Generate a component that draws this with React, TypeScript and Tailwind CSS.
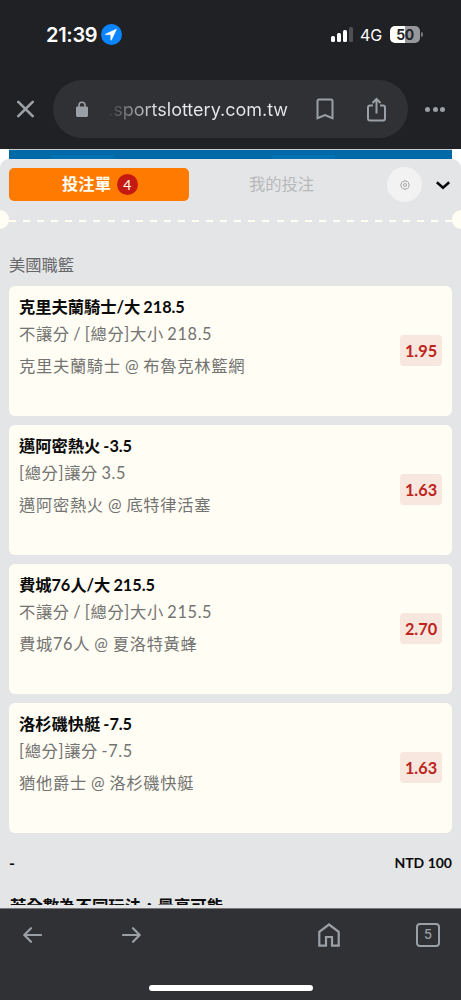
type BetTypes = {
  title: string;
  market: string;
  match: string;
  odds: string;
};

const bets: BetTypes[] = [
  { title: '克里夫蘭騎士/大 218.5', market: '不讓分 / [總分]大小 218.5', match: '克里夫蘭騎士 @ 布魯克林籃網', odds: '1.95' },
  { title: '邁阿密熱火 -3.5', market: '[總分]讓分 3.5', match: '邁阿密熱火 @ 底特律活塞', odds: '1.63' },
  { title: '費城76人/大 215.5', market: '不讓分 / [總分]大小 215.5', match: '費城76人 @ 夏洛特黃蜂', odds: '2.70' },
  { title: '洛杉磯快艇 -7.5', market: '[總分]讓分 -7.5', match: '猶他爵士 @ 洛杉磯快艇', odds: '1.63' },
];

const StatusBar = () => {
  return (
    <div className="flex h-[69px] items-center pl-[46px] pr-[38px]">
      <span className="w-[55px] text-[20px] font-semibold tracking-[-0.3px] text-white">21:39</span>
      <svg className="h-[21px] w-[21px]" viewBox="0 0 21 21">
        <circle cx="10.5" cy="10.5" r="10.5" fill="#0a84ff" />
        <path d="M15.6 5.1 4.6 9.9c-.5.3-.4.8.1.8h5v5.1c0 .6.6.6.8.1z" fill="#fff" stroke="#fff" strokeWidth=".4" strokeLinejoin="round" />
      </svg>
      <div className="ml-auto flex items-center">
        <div className="mr-[7px] flex h-[15px] items-end gap-[2px]">
          <span className="h-[6px] w-[4px] rounded-[1.5px] bg-white" />
          <span className="h-[9px] w-[4px] rounded-[1.5px] bg-white" />
          <span className="h-[12px] w-[4px] rounded-[1.5px] bg-white" />
          <span className="h-[15px] w-[4px] rounded-[1.5px] bg-[#505154]" />
        </div>
        <span className="mr-[7px] w-[23px] text-[16px] tracking-[-0.2px] text-white">4G</span>
        <div className="flex h-[17px] w-[30px] items-center justify-center rounded-[5px] bg-[linear-gradient(90deg,#fff_50%,#98989a_50%)] text-[14px] font-bold leading-none tracking-[-0.5px] text-[#242528]">
          50
        </div>
        <span className="ml-[1px] h-[5px] w-[2px] rounded-r-full bg-[#77787a]" />
      </div>
    </div>
  );
};

const AddressBar = () => {
  return (
    <div className="flex h-[80px] items-center">
      <svg className="ml-[16px] h-[18px] w-[19px]" viewBox="0 0 19 18" fill="none" stroke="#9aa0a6" strokeWidth="2.7" strokeLinecap="round">
        <path d="m2.3 1.9 14.4 14.2M16.7 1.9 2.3 16.1" />
      </svg>
      <div className="ml-[18px] flex h-[58px] w-[355px] items-center rounded-full bg-[#303134]">
        <svg className="ml-[23px] h-[16px] w-[12px]" viewBox="0 0 12 16">
          <path d="M3 6V4.2a3 3 0 0 1 6 0V6" fill="none" stroke="#9aa0a6" strokeWidth="1.6" />
          <rect y="5.6" width="12" height="10.4" rx="1.4" fill="#9aa0a6" />
        </svg>
        <span className="ml-[20px] w-[184px] whitespace-nowrap bg-[linear-gradient(90deg,#3a3b3e_0,#e8eaed_50px)] bg-clip-text pt-[2px] text-[18px] leading-[26px] text-transparent">
          .sportslottery.com.tw
        </span>
        <svg className="ml-[24px] h-[23px] w-[18px]" viewBox="0 0 18 23" fill="none" stroke="#9aa0a6" strokeWidth="2">
          <path d="M1.5 20.2V3q0-1.5 1.5-1.5h12q1.5 0 1.5 1.5v17.2L9 17.1z" />
        </svg>
        <svg className="ml-[33px] h-[25px] w-[19px]" viewBox="0 0 19 25" fill="none" stroke="#9aa0a6" strokeWidth="2">
          <path d="M6 8.5H3Q1 8.5 1 10.5v11q0 2 2 2h13q2 0 2-2v-11q0-2-2-2h-3M9.5 16.5V2.5M5.5 6l4-4 4 4" />
        </svg>
      </div>
      <div className="ml-[17px] flex gap-[2.7px]">
        <span className="h-[5px] w-[5px] rounded-full bg-[#9aa0a6]" />
        <span className="h-[5px] w-[5px] rounded-full bg-[#9aa0a6]" />
        <span className="h-[5px] w-[5px] rounded-full bg-[#9aa0a6]" />
      </div>
    </div>
  );
};

const Tabs = () => {
  return (
    <div className="flex h-[51px] items-center pl-[9px]">
      <button className="flex h-[33px] w-[180px] items-center justify-center gap-[6px] rounded-[5px] bg-[#ff7a00] pl-[2px] text-[16.3px] font-bold text-[#fffdf4]">
        投注單
        <span className="flex h-[21px] w-[21px] items-center justify-center rounded-full bg-[#c41a11] text-[14px] font-normal">4</span>
      </button>
      <span className="ml-[60px] w-[138px] text-[16.3px] text-[#b7b8ba]">我的投注</span>
      <div className="flex h-[35px] w-[35px] items-center justify-center rounded-full bg-[#f2f2f2]">
        <svg className="h-[10px] w-[10px]" viewBox="0 0 20 20" fill="none" stroke="#a3a3a3" strokeWidth="1.9" strokeLinejoin="round">
          <path d="M8 1.5h4l.7 2.2 2.2-.8 2.6 2.7-1 2.2 2 .9v3l-2 .8 1 2.2-2.6 2.6-2.2-.9-.7 2.1H8l-.8-2.1-2.2.9-2.6-2.6 1-2.2-2-.8v-3l2-.9-1-2.2L5 2.9l2.2.8z" />
          <circle cx="10" cy="10" r="3" />
        </svg>
      </div>
      <svg className="ml-[14px] mt-px h-[9px] w-[14px]" viewBox="0 0 14 9" fill="none" stroke="#0b0b0b" strokeWidth="2.6">
        <path d="m.8 1.3 6.2 5.5 6.2-5.5" />
      </svg>
    </div>
  );
};

const Divider = () => {
  return (
    <div className="flex h-[19px] items-center">
      <span className="h-[19px] w-[9px] rounded-r-full bg-[#fffdf4]" />
      <span className="mt-[3px] h-[2px] flex-1 bg-[repeating-linear-gradient(90deg,#fffdf4_0,#fffdf4_7px,transparent_7px,transparent_14.08px)]" />
      <span className="h-[19px] w-[9px] rounded-l-full bg-[#fffdf4]" />
    </div>
  );
};

const BetCard = ({ title, market, match, odds }: BetTypes) => {
  return (
    <div className="flex h-[130px] items-center justify-between rounded-[6px] bg-[#fffdf4] px-[10px]">
      <div className="flex h-full flex-col whitespace-nowrap pt-[7px] text-[16.3px] text-[#737371]">
        <span className="h-[27px] font-bold leading-[27px] tracking-[-0.05px] text-[#0b0b0b] [word-spacing:-0.7px]">{title}</span>
        <span className="h-[28px] leading-[28px] tracking-[0.65px] [word-spacing:-1.3px]">{market}</span>
        <span className="mt-[4px] h-[28px] leading-[28px] tracking-[0.68px] [word-spacing:-0.7px]">{match}</span>
      </div>
      <span className="-mt-px flex h-[31px] w-[42px] items-center justify-center rounded-[4px] bg-[#f8e7df] pt-px text-[16.3px] font-bold text-[#bd251c]">
        {odds}
      </span>
    </div>
  );
};

const Toolbar = () => {
  return (
    <div className="h-[92px] border-t border-[#77787a] bg-[#303134]">
      <div className="flex h-[51px] items-center pl-[23px]">
        <svg className="h-[16px] w-[19px]" viewBox="0 0 19 16" fill="none" stroke="#9aa0a6" strokeWidth="2.2" strokeLinecap="round" strokeLinejoin="round">
          <path d="M18 8H1.5M8 1.2 1.3 8 8 14.8" />
        </svg>
        <svg className="ml-[80px] h-[16px] w-[19px]" viewBox="0 0 19 16" fill="none" stroke="#9aa0a6" strokeWidth="2.2" strokeLinecap="round" strokeLinejoin="round">
          <path d="M1 8h16.5M11 1.2 17.7 8 11 14.8" />
        </svg>
        <svg className="ml-[177px] h-[24px] w-[22px]" viewBox="0 0 22 24" fill="none" stroke="#9aa0a6" strokeWidth="2.2">
          <path d="M1.3 22.7V8.8L11 1.5l9.7 7.3v13.9H14V14H8v8.7z" />
        </svg>
        <div className="ml-[76px] flex h-[24px] w-[24px] items-center justify-center rounded-[4px] border-2 border-[#9aa0a6] text-[13px] font-medium text-[#9aa0a6]">
          5
        </div>
      </div>
      <div className="mx-auto mt-[25px] h-[6px] w-[164px] rounded-full bg-white" />
    </div>
  );
};

const App = () => {
  return (
    <div className="flex h-[1000px] w-[461px] flex-col overflow-hidden bg-[#e4e5e7] font-['Inter','Noto_Sans_CJK_TC',sans-serif]">
      <header className="h-[149px] shrink-0 bg-[#202124]">
        <StatusBar />
        <AddressBar />
      </header>
      <main className="h-[759px] shrink-0 overflow-hidden bg-white font-['Lato','Noto_Sans_CJK_TC',sans-serif]">
        <div className="mx-[9px] flex h-[10px] items-end border-t border-[#c9cdd0] bg-[#006aa8]">
          <span className="ml-[42px] h-[4px] w-[63px] bg-[#0072b3]" />
          <span className="ml-[158px] h-[4px] w-[63px] bg-[#0072b3]" />
        </div>
        <div className="h-[749px] rounded-t-[9px] bg-[#e4e5e7]">
          <Tabs />
          <Divider />
          <h2 className="flex h-[57px] items-center pl-[9px] pt-[15px] text-[16.3px] text-[#666769]">美國職籃</h2>
          <div className="flex flex-col gap-[9px] px-[9px]">
            {bets.map((bet) => (
              <BetCard key={bet.title} {...bet} />
            ))}
          </div>
          <div className="flex h-[61px] items-center justify-between px-[9px] pb-[2px] text-[14px] font-bold text-[#0b0b0b]">
            <span className="text-[16px]">-</span>
            <span>NTD 100</span>
          </div>
          <p className="h-[11px] overflow-hidden whitespace-nowrap pl-[10px] text-[16.4px] font-bold leading-[23px] text-[#0b0b0b]">
            若全數為不同玩法，最高可能
          </p>
        </div>
      </main>
      <Toolbar />
    </div>
  );
};

export default App;
